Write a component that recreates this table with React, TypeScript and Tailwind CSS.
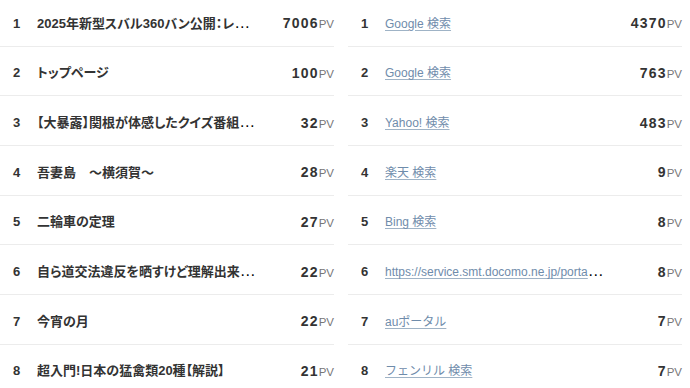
import * as React from 'react';

type Row = { rank: number; title: string; pv: number };

const pages: Row[] = [
  { rank: 1, title: '2025年新型スバル360バン公開：レトロな外観と最新技術の融合', pv: 7006 },
  { rank: 2, title: 'トップページ', pv: 100 },
  { rank: 3, title: '【大暴露】関根が体感したクイズ番組の裏側とは', pv: 32 },
  { rank: 4, title: '吾妻島　～横須賀～', pv: 28 },
  { rank: 5, title: '二輪車の定理', pv: 27 },
  { rank: 6, title: '自ら道交法違反を晒すけど理解出来ない人たち', pv: 22 },
  { rank: 7, title: '今宵の月', pv: 22 },
  { rank: 8, title: '超入門!日本の猛禽類20種【解説】', pv: 21 },
];

const referers: Row[] = [
  { rank: 1, title: 'Google 検索', pv: 4370 },
  { rank: 2, title: 'Google 検索', pv: 763 },
  { rank: 3, title: 'Yahoo! 検索', pv: 483 },
  { rank: 4, title: '楽天 検索', pv: 9 },
  { rank: 5, title: 'Bing 検索', pv: 8 },
  { rank: 6, title: 'https://service.smt.docomo.ne.jp/portal/search/web/result.html', pv: 8 },
  { rank: 7, title: 'auポータル', pv: 7 },
  { rank: 8, title: 'フェンリル 検索', pv: 7 },
];

const RankList = ({ rows, link }: { rows: Row[]; link?: boolean }) => (
  <ul className="flex flex-col">
    {rows.map((r) => (
      <li key={r.rank} className="flex items-center h-[49.67px] pt-[4px] border-b border-[#ececec]">
        <span className="w-[37px] shrink-0 pl-[13px] text-[13px] font-bold text-[#333]">{r.rank}</span>
        {link ? (
          <span className="flex-1 min-w-0 truncate pr-[8px] leading-[20px]">
            <a className="text-[12px] text-[#6f8cab] underline underline-offset-2 decoration-[#9fb3c6]">{r.title}</a>
          </span>
        ) : (
          <span className="flex-1 min-w-0 truncate pr-[4px] leading-[20px]">
            <span className="text-[13px] font-bold text-[#333] [font-feature-settings:'palt']">{r.title}</span>
          </span>
        )}
        <span className="w-[70px] shrink-0 text-right whitespace-nowrap">
          <span className="text-[14px] font-bold tracking-[1.2px] text-[#333]">{r.pv}</span>
          <span className="text-[11.5px] text-[#777]">PV</span>
        </span>
      </li>
    ))}
  </ul>
);

export default function App() {
  return (
    <div
      className="w-[690px] h-[388px] overflow-hidden bg-white"
      style={{ fontFamily: '"Liberation Sans", "Noto Sans CJK JP", sans-serif' }}
    >
      <div className="grid grid-cols-2 gap-x-[14px] w-[682px] -mt-[3px]">
        <RankList rows={pages} />
        <RankList rows={referers} link />
      </div>
    </div>
  );
}
